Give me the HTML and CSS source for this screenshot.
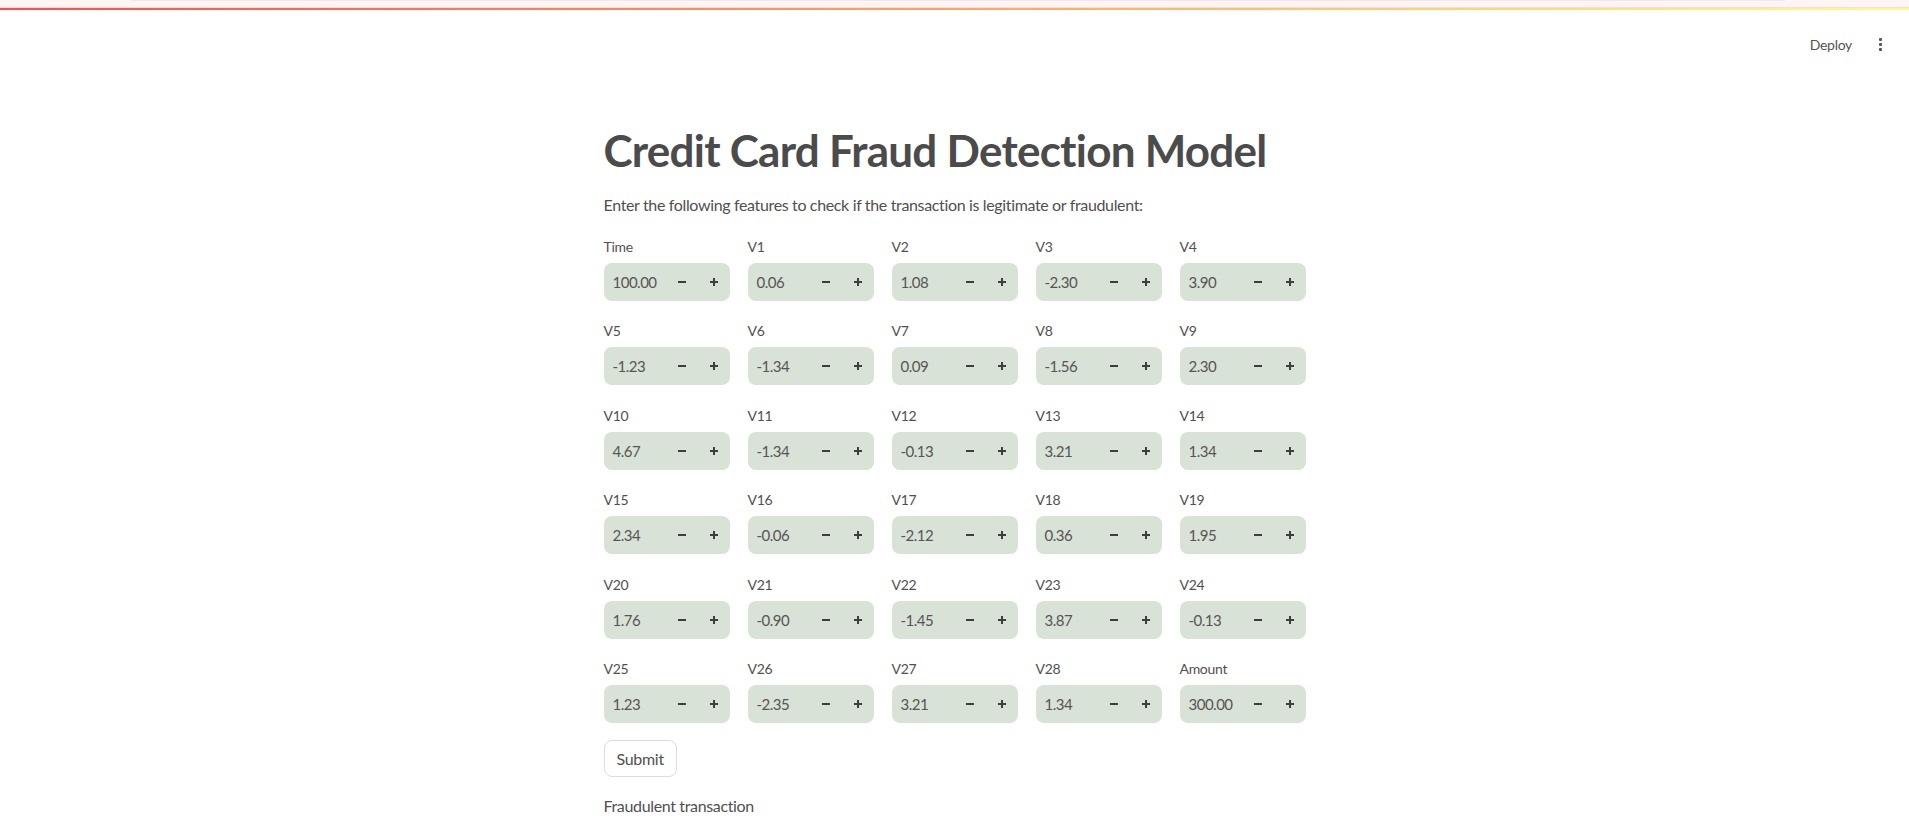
FILE: index.html
```html
<!DOCTYPE html>
<html lang="en">
<head>
<meta charset="utf-8">
<title>Credit Card Fraud Detection Model</title>
<link rel="stylesheet" href="styles.css">
</head>
<body>
<div class="strip"><div class="strip-line"></div></div>
<div class="sep"></div>
<div class="deco"></div>
<header class="header">
  <span class="deploy">Deploy</span>
  <span class="kebab"><i></i><i></i><i></i></span>
</header>
<main class="main">
  <h1 class="title">Credit Card Fraud Detection Model</h1>
  <p class="intro">Enter the following features to check if the transaction is legitimate or fraudulent:</p>
  <div class="grid">
    <div class="field"><label>Time</label><div class="box"><span class="val">100.00</span><span class="btn"><svg viewBox="0 0 10 10"><path d="M1 5h8"/></svg></span><span class="btn"><svg viewBox="0 0 10 10"><path d="M1 5h8M5 1v8"/></svg></span></div></div>
    <div class="field"><label>V1</label><div class="box"><span class="val">0.06</span><span class="btn"><svg viewBox="0 0 10 10"><path d="M1 5h8"/></svg></span><span class="btn"><svg viewBox="0 0 10 10"><path d="M1 5h8M5 1v8"/></svg></span></div></div>
    <div class="field"><label>V2</label><div class="box"><span class="val">1.08</span><span class="btn"><svg viewBox="0 0 10 10"><path d="M1 5h8"/></svg></span><span class="btn"><svg viewBox="0 0 10 10"><path d="M1 5h8M5 1v8"/></svg></span></div></div>
    <div class="field"><label>V3</label><div class="box"><span class="val">-2.30</span><span class="btn"><svg viewBox="0 0 10 10"><path d="M1 5h8"/></svg></span><span class="btn"><svg viewBox="0 0 10 10"><path d="M1 5h8M5 1v8"/></svg></span></div></div>
    <div class="field"><label>V4</label><div class="box"><span class="val">3.90</span><span class="btn"><svg viewBox="0 0 10 10"><path d="M1 5h8"/></svg></span><span class="btn"><svg viewBox="0 0 10 10"><path d="M1 5h8M5 1v8"/></svg></span></div></div>

    <div class="field"><label>V5</label><div class="box"><span class="val">-1.23</span><span class="btn"><svg viewBox="0 0 10 10"><path d="M1 5h8"/></svg></span><span class="btn"><svg viewBox="0 0 10 10"><path d="M1 5h8M5 1v8"/></svg></span></div></div>
    <div class="field"><label>V6</label><div class="box"><span class="val">-1.34</span><span class="btn"><svg viewBox="0 0 10 10"><path d="M1 5h8"/></svg></span><span class="btn"><svg viewBox="0 0 10 10"><path d="M1 5h8M5 1v8"/></svg></span></div></div>
    <div class="field"><label>V7</label><div class="box"><span class="val">0.09</span><span class="btn"><svg viewBox="0 0 10 10"><path d="M1 5h8"/></svg></span><span class="btn"><svg viewBox="0 0 10 10"><path d="M1 5h8M5 1v8"/></svg></span></div></div>
    <div class="field"><label>V8</label><div class="box"><span class="val">-1.56</span><span class="btn"><svg viewBox="0 0 10 10"><path d="M1 5h8"/></svg></span><span class="btn"><svg viewBox="0 0 10 10"><path d="M1 5h8M5 1v8"/></svg></span></div></div>
    <div class="field"><label>V9</label><div class="box"><span class="val">2.30</span><span class="btn"><svg viewBox="0 0 10 10"><path d="M1 5h8"/></svg></span><span class="btn"><svg viewBox="0 0 10 10"><path d="M1 5h8M5 1v8"/></svg></span></div></div>

    <div class="field"><label>V10</label><div class="box"><span class="val">4.67</span><span class="btn"><svg viewBox="0 0 10 10"><path d="M1 5h8"/></svg></span><span class="btn"><svg viewBox="0 0 10 10"><path d="M1 5h8M5 1v8"/></svg></span></div></div>
    <div class="field"><label>V11</label><div class="box"><span class="val">-1.34</span><span class="btn"><svg viewBox="0 0 10 10"><path d="M1 5h8"/></svg></span><span class="btn"><svg viewBox="0 0 10 10"><path d="M1 5h8M5 1v8"/></svg></span></div></div>
    <div class="field"><label>V12</label><div class="box"><span class="val">-0.13</span><span class="btn"><svg viewBox="0 0 10 10"><path d="M1 5h8"/></svg></span><span class="btn"><svg viewBox="0 0 10 10"><path d="M1 5h8M5 1v8"/></svg></span></div></div>
    <div class="field"><label>V13</label><div class="box"><span class="val">3.21</span><span class="btn"><svg viewBox="0 0 10 10"><path d="M1 5h8"/></svg></span><span class="btn"><svg viewBox="0 0 10 10"><path d="M1 5h8M5 1v8"/></svg></span></div></div>
    <div class="field"><label>V14</label><div class="box"><span class="val">1.34</span><span class="btn"><svg viewBox="0 0 10 10"><path d="M1 5h8"/></svg></span><span class="btn"><svg viewBox="0 0 10 10"><path d="M1 5h8M5 1v8"/></svg></span></div></div>

    <div class="field"><label>V15</label><div class="box"><span class="val">2.34</span><span class="btn"><svg viewBox="0 0 10 10"><path d="M1 5h8"/></svg></span><span class="btn"><svg viewBox="0 0 10 10"><path d="M1 5h8M5 1v8"/></svg></span></div></div>
    <div class="field"><label>V16</label><div class="box"><span class="val">-0.06</span><span class="btn"><svg viewBox="0 0 10 10"><path d="M1 5h8"/></svg></span><span class="btn"><svg viewBox="0 0 10 10"><path d="M1 5h8M5 1v8"/></svg></span></div></div>
    <div class="field"><label>V17</label><div class="box"><span class="val">-2.12</span><span class="btn"><svg viewBox="0 0 10 10"><path d="M1 5h8"/></svg></span><span class="btn"><svg viewBox="0 0 10 10"><path d="M1 5h8M5 1v8"/></svg></span></div></div>
    <div class="field"><label>V18</label><div class="box"><span class="val">0.36</span><span class="btn"><svg viewBox="0 0 10 10"><path d="M1 5h8"/></svg></span><span class="btn"><svg viewBox="0 0 10 10"><path d="M1 5h8M5 1v8"/></svg></span></div></div>
    <div class="field"><label>V19</label><div class="box"><span class="val">1.95</span><span class="btn"><svg viewBox="0 0 10 10"><path d="M1 5h8"/></svg></span><span class="btn"><svg viewBox="0 0 10 10"><path d="M1 5h8M5 1v8"/></svg></span></div></div>

    <div class="field"><label>V20</label><div class="box"><span class="val">1.76</span><span class="btn"><svg viewBox="0 0 10 10"><path d="M1 5h8"/></svg></span><span class="btn"><svg viewBox="0 0 10 10"><path d="M1 5h8M5 1v8"/></svg></span></div></div>
    <div class="field"><label>V21</label><div class="box"><span class="val">-0.90</span><span class="btn"><svg viewBox="0 0 10 10"><path d="M1 5h8"/></svg></span><span class="btn"><svg viewBox="0 0 10 10"><path d="M1 5h8M5 1v8"/></svg></span></div></div>
    <div class="field"><label>V22</label><div class="box"><span class="val">-1.45</span><span class="btn"><svg viewBox="0 0 10 10"><path d="M1 5h8"/></svg></span><span class="btn"><svg viewBox="0 0 10 10"><path d="M1 5h8M5 1v8"/></svg></span></div></div>
    <div class="field"><label>V23</label><div class="box"><span class="val">3.87</span><span class="btn"><svg viewBox="0 0 10 10"><path d="M1 5h8"/></svg></span><span class="btn"><svg viewBox="0 0 10 10"><path d="M1 5h8M5 1v8"/></svg></span></div></div>
    <div class="field"><label>V24</label><div class="box"><span class="val">-0.13</span><span class="btn"><svg viewBox="0 0 10 10"><path d="M1 5h8"/></svg></span><span class="btn"><svg viewBox="0 0 10 10"><path d="M1 5h8M5 1v8"/></svg></span></div></div>

    <div class="field"><label>V25</label><div class="box"><span class="val">1.23</span><span class="btn"><svg viewBox="0 0 10 10"><path d="M1 5h8"/></svg></span><span class="btn"><svg viewBox="0 0 10 10"><path d="M1 5h8M5 1v8"/></svg></span></div></div>
    <div class="field"><label>V26</label><div class="box"><span class="val">-2.35</span><span class="btn"><svg viewBox="0 0 10 10"><path d="M1 5h8"/></svg></span><span class="btn"><svg viewBox="0 0 10 10"><path d="M1 5h8M5 1v8"/></svg></span></div></div>
    <div class="field"><label>V27</label><div class="box"><span class="val">3.21</span><span class="btn"><svg viewBox="0 0 10 10"><path d="M1 5h8"/></svg></span><span class="btn"><svg viewBox="0 0 10 10"><path d="M1 5h8M5 1v8"/></svg></span></div></div>
    <div class="field"><label>V28</label><div class="box"><span class="val">1.34</span><span class="btn"><svg viewBox="0 0 10 10"><path d="M1 5h8"/></svg></span><span class="btn"><svg viewBox="0 0 10 10"><path d="M1 5h8M5 1v8"/></svg></span></div></div>
    <div class="field"><label>Amount</label><div class="box"><span class="val">300.00</span><span class="btn"><svg viewBox="0 0 10 10"><path d="M1 5h8"/></svg></span><span class="btn"><svg viewBox="0 0 10 10"><path d="M1 5h8M5 1v8"/></svg></span></div></div>
  </div>
  <button class="submit" type="button">Submit</button>
  <p class="result">Fraudulent transaction</p>
</main>
</body>
</html>
```

FILE: styles.css
```css
html, body {
  margin: 0;
  padding: 0;
  background: #ffffff;
}

body {
  font-family: Lato, "Noto Sans", "Liberation Sans", sans-serif;
  color: #505050;
}

.strip {
  height: 7px;
  background: #fff5f5;
}

.strip-line {
  margin-left: 130px;
  width: 1655px;
  height: 1px;
  background: #f5e6ee;
}

.sep {
  height: 1px;
  background: #f3dede;
}

.deco {
  height: 2px;
  background: linear-gradient(90deg, #ff4b4b, #fffd80);
}

.header {
  height: 68px;
  display: flex;
  justify-content: flex-end;
  align-items: center;
  padding-right: 15px;
}

.deploy {
  font-size: 14px;
  color: #555555;
  margin-right: 14px;
  letter-spacing: -0.3px;
}

.kebab {
  width: 28px;
  display: flex;
  flex-direction: column;
  align-items: center;
  gap: 2px;
}

.kebab i {
  display: block;
  width: 3px;
  height: 3px;
  border-radius: 1px;
  background: #555555;
}

.main {
  width: 702px;
  margin: 0 auto;
}

.title {
  margin: 0;
  padding-top: 46px;
  font-size: 44px;
  line-height: 52px;
  font-weight: 700;
  color: #4b4b4b;
  letter-spacing: -0.75px;
}

.intro {
  margin: 17px 0 0;
  font-size: 16px;
  line-height: 24px;
  letter-spacing: -0.35px;
}

.grid {
  margin-top: 20px;
  display: grid;
  grid-template-columns: repeat(5, 126px);
  column-gap: 18px;
  row-gap: 20.4px;
}

.field label {
  display: block;
  font-size: 14px;
  line-height: 20px;
  height: 26px;
  letter-spacing: -0.3px;
}

.box {
  height: 38px;
  border-radius: 8px;
  background: #d9e2d6;
  display: flex;
  align-items: center;
}

.val {
  flex: 1;
  padding-left: 9px;
  font-size: 15px;
  letter-spacing: -0.5px;
  color: #555555;
}

.btn {
  width: 32px;
  height: 38px;
  display: flex;
  align-items: center;
  justify-content: center;
}

.btn svg {
  width: 10px;
  height: 10px;
  fill: none;
  stroke: #3e3e3e;
  stroke-width: 2;
}

.submit {
  display: block;
  margin-top: 17.4px;
  height: 37px;
  padding: 0 12px;
  border: 1px solid #dcdcdc;
  border-radius: 8px;
  background: #ffffff;
  font-family: inherit;
  font-size: 16px;
  letter-spacing: -0.3px;
  color: #505050;
}

.result {
  margin: 17px 0 0;
  font-size: 16px;
  line-height: 24px;
  letter-spacing: -0.35px;
}
```
